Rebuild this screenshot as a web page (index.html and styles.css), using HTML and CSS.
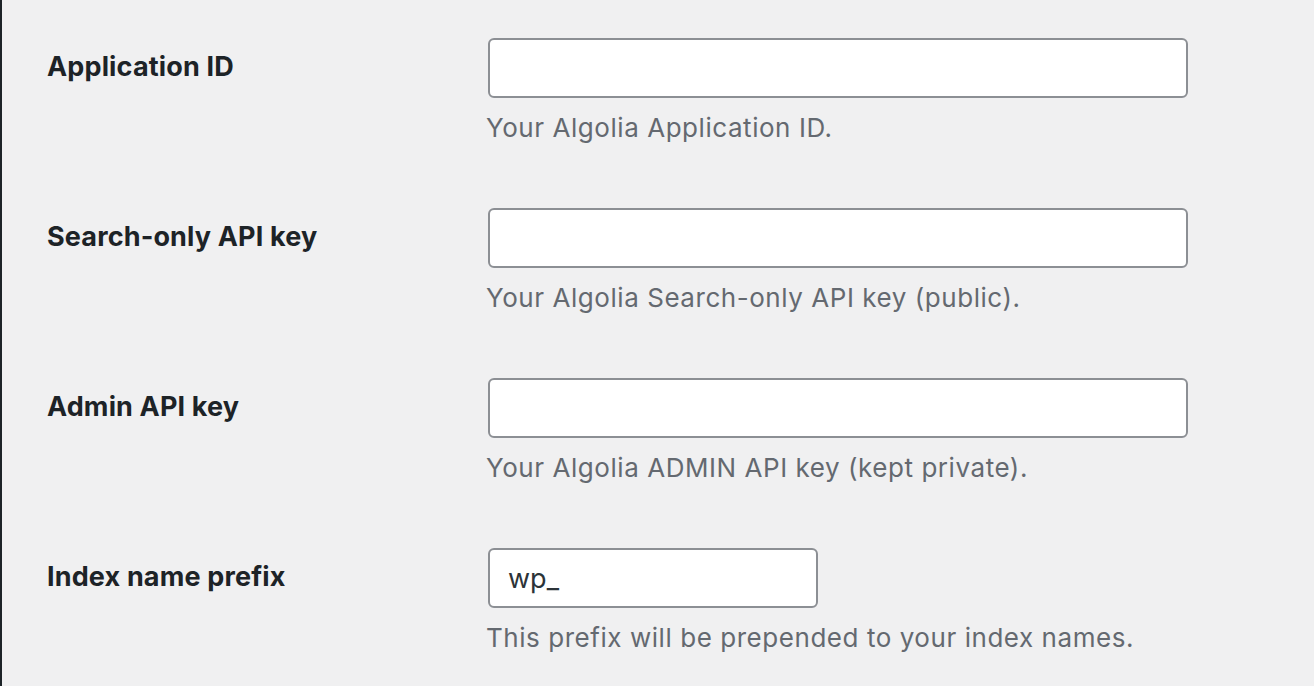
FILE: index.html
```html
<!DOCTYPE html>
<html>
<head>
<meta charset="utf-8">
<link rel="stylesheet" href="styles.css">
</head>
<body>
<div class="page">
  <div class="form">
    <div class="row">
      <div class="label">Application ID</div>
      <div class="field">
        <input class="input" type="text" value="">
        <p class="desc">Your Algolia Application ID.</p>
      </div>
    </div>
    <div class="row">
      <div class="label">Search-only API key</div>
      <div class="field">
        <input class="input" type="text" value="">
        <p class="desc">Your Algolia Search-only API key (public).</p>
      </div>
    </div>
    <div class="row">
      <div class="label">Admin API key</div>
      <div class="field">
        <input class="input" type="text" value="">
        <p class="desc">Your Algolia ADMIN API key (kept private).</p>
      </div>
    </div>
    <div class="row">
      <div class="label">Index name prefix</div>
      <div class="field">
        <input class="input input-small" type="text" value="wp_">
        <p class="desc">This prefix will be prepended to your index names.</p>
      </div>
    </div>
  </div>
</div>
</body>
</html>
```

FILE: styles.css
```css
html, body {
  margin: 0;
  padding: 0;
  height: 100%;
  background: #f0f0f1;
}
body {
  font-family: Inter, "Liberation Sans", sans-serif;
  color: #1d2327;
}
.page {
  min-height: 100%;
  border-left: 2px solid #1d2327;
  box-sizing: border-box;
  overflow: hidden;
}
.form {
  padding-top: 38px;
}
.row {
  display: flex;
  height: 170px;
}
.label {
  width: 441px;
  padding-left: 45px;
  padding-top: 11px;
  font-size: 27px;
  font-weight: 700;
  letter-spacing: 0.15px;
  line-height: 36px;
  flex-shrink: 0;
}
.field {
  display: flex;
  flex-direction: column;
  align-items: flex-start;
}
.input {
  box-sizing: border-box;
  width: 700px;
  height: 60px;
  margin: 0;
  padding: 0 18px;
  border: 2px solid #8c8f94;
  border-radius: 6px;
  background: #fff;
  font-family: inherit;
  font-size: 27px;
  color: #2c3338;
  outline: none;
}
.input-small {
  width: 330px;
}
.desc {
  margin: 12px 0 0 -2px;
  font-size: 26px;
  letter-spacing: 0.55px;
  line-height: 36px;
  color: #646970;
}
```
